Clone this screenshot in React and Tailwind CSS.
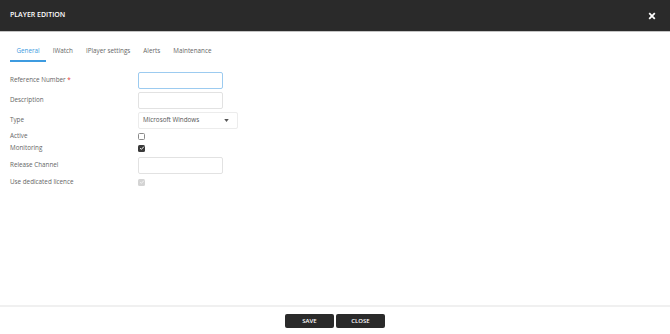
import React from 'react';

const TABS = ['General', 'IWatch', 'IPlayer settings', 'Alerts', 'Maintenance'];

function Checkbox({ checked, disabled }) {
  if (!checked) {
    return <span className="block h-[7px] w-[7px] rounded-[1.5px] border border-[#8a8a8a] bg-white" />;
  }
  return (
    <span
      className={
        'flex h-[7px] w-[7px] items-center justify-center rounded-[1.5px] ' +
        (disabled ? 'bg-[#d4d4d4]' : 'bg-[#3a3a3a]')
      }
    >
      <svg viewBox="0 0 8 8" className="h-[6px] w-[6px]">
        <path
          d="M1.5 4.2 L3.2 5.8 L6.5 2.2"
          fill="none"
          stroke={disabled ? '#f2f2f2' : '#ffffff'}
          strokeWidth="1.3"
        />
      </svg>
    </span>
  );
}

function TextInput({ focused }) {
  return (
    <div
      className={
        'h-[17px] w-[85px] rounded-[2px] border bg-white ' +
        (focused ? 'border-[#9ccbf0]' : 'border-[#e2e2e2]')
      }
    />
  );
}

function Row({ label, required, className, children }) {
  return (
    <div className={'flex items-center ' + className}>
      <div className="w-[128px] text-[6.3px] text-[#666]">
        {label}
        {required ? <span className="text-[#e53935]"> *</span> : null}
      </div>
      <div className="flex items-center">{children}</div>
    </div>
  );
}

export default function App() {
  return (
    <div
      className="flex h-[334px] w-[670px] flex-col bg-white"
      style={{ fontFamily: '"Open Sans", "Liberation Sans", sans-serif' }}
    >
      <div className="flex h-[32px] items-center justify-between border-b border-[#c4c4c4] bg-[#2a2a2a] pl-[10px] pr-[14px]">
        <span className="text-[7px] font-semibold text-white">PLAYER EDITION</span>
        <svg viewBox="0 0 10 10" className="h-[8px] w-[8px]">
          <path d="M1.5 1.5 L8.5 8.5 M8.5 1.5 L1.5 8.5" stroke="#fff" strokeWidth="2.2" />
        </svg>
      </div>

      <div className="flex-1 px-[10px]">
        <div className="mt-[10px] flex">
          {TABS.map((tab, i) => (
            <div
              key={tab}
              className={
                'flex h-[20px] items-center px-[6.5px] text-[6.3px] ' +
                (i === 0
                  ? 'border-b-2 border-[#3d9be0] text-[#3d9be0]'
                  : 'border-b-2 border-transparent text-[#666]')
              }
            >
              {tab}
            </div>
          ))}
        </div>

        <div className="flex flex-col">
          <Row label="Reference Number" required className="mt-[9px] h-[18px]">
            <TextInput focused />
          </Row>
          <Row label="Description" className="mt-[2px] h-[18px]">
            <TextInput />
          </Row>
          <Row label="Type" className="mt-[2px] h-[18px]">
            <div className="flex h-[17px] w-[100px] items-center justify-between rounded-[2px] border border-[#ececec] bg-white pl-[4px] pr-[8px] text-[6.3px] text-[#555]">
              <span>Microsoft Windows</span>
              <svg viewBox="0 0 6 4" className="h-[3px] w-[5px]">
                <path d="M0 0 L6 0 L3 4 Z" fill="#555" />
              </svg>
            </div>
          </Row>
          <Row label="Active" className="mt-[1px] h-[12px]">
            <Checkbox />
          </Row>
          <Row label="Monitoring" className="h-[12px]">
            <Checkbox checked />
          </Row>
          <Row label="Release Channel" className="mt-[2px] h-[18px]">
            <TextInput />
          </Row>
          <Row label="Use dedicated licence" className="mt-[2px] h-[12px]">
            <Checkbox checked disabled />
          </Row>
        </div>
      </div>

      <div className="flex justify-center gap-[2px] border-t-2 border-[#f0f0f0] pb-[6px] pt-[7px]">
        <button className="h-[14px] w-[49px] rounded-[2px] bg-[#2a2a2a] text-[6px] font-semibold text-white">
          SAVE
        </button>
        <button className="h-[14px] w-[49px] rounded-[2px] bg-[#2a2a2a] text-[6px] font-semibold text-white">
          CLOSE
        </button>
      </div>
    </div>
  );
}
